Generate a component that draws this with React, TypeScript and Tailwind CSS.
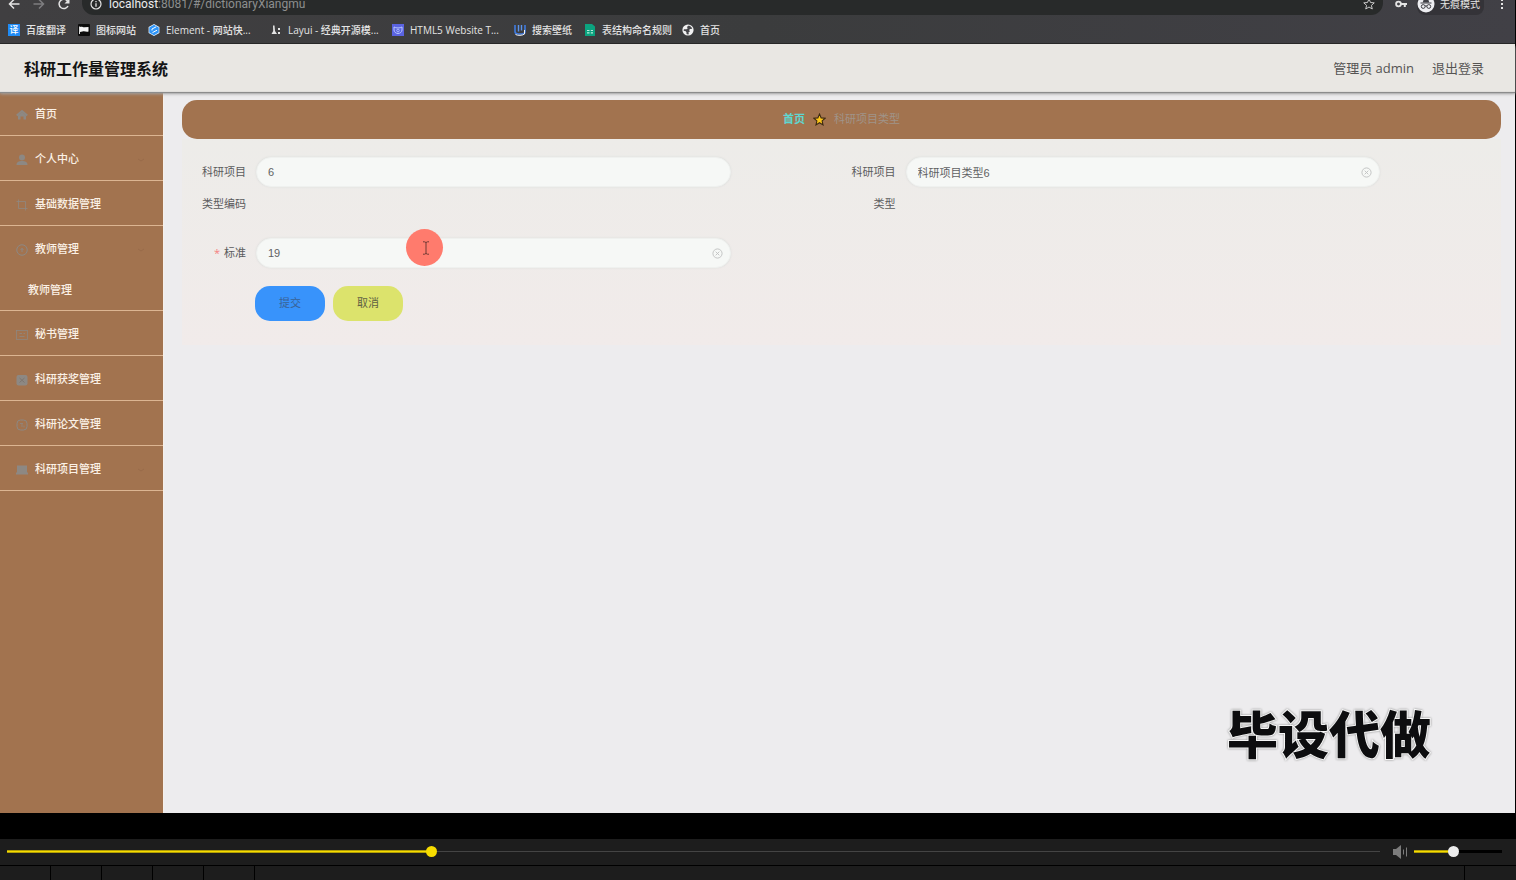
import React, { useState } from 'react';
import clsx from 'clsx';

const Svg = ({ className, children, box = 24 }: { className?: string; children: React.ReactNode; box?: number }) => (
    <svg
        viewBox={`0 0 ${box} ${box}`}
        className={clsx('shrink-0', className)}
        fill="none"
        stroke="currentColor"
        strokeWidth="2"
        aria-hidden="true"
    >
        {children}
    </svg>
);

const bookmarks = [
    {
        label: '百度翻译',
        width: 'w-[70px]',
        icon: (
            <span className="flex size-3 shrink-0 items-center justify-center bg-[#1f8bf5] text-[9px] leading-3 text-white">译</span>
        ),
    },
    {
        label: '图标网站',
        width: 'w-[70px]',
        icon: (
            <Svg box={12} className="size-3">
                <rect width="12" height="12" rx="1" fill="#0c0c0c" stroke="none" />
                <path d="M1.500 2.500v7.500" stroke="#ddd" strokeWidth="1" />
                <path d="M2 3c2-1 3 .6 4.500.3L10.500 3v4.500c-2 .8-3.500-.4-5-.2L2 8z" fill="#f4f4f4" stroke="none" />
            </Svg>
        ),
    },
    {
        label: 'Element - 网站快...',
        width: 'w-[122px]',
        icon: (
            <Svg box={12} className="size-3">
                <path d="M6 0l5.400 3v6L6 12 .6 9V3z" fill="#eaf5ff" stroke="none" />
                <path d="M6 .8l4.700 2.600v5.200L6 11.200 1.300 8.600V3.400z" fill="#2f95f8" stroke="none" />
                <path d="M4 6.500V5L8.200 2.800M4.500 8.600L9 6.200" stroke="#fff" strokeWidth="1" />
            </Svg>
        ),
    },
    {
        label: 'Layui - 经典开源模...',
        width: 'w-[122px]',
        icon: (
            <Svg box={12} className="size-3">
                <path d="M3 1.500h1.500L5 7l2 3H1.500L3.200 7z" fill="#e4e4e4" stroke="none" />
                <path d="M9 4v2M9 8v2" stroke="#e4e4e4" strokeWidth="2" />
            </Svg>
        ),
    },
    {
        label: 'HTML5 Website T...',
        width: 'w-[122px]',
        icon: (
            <Svg box={12} className="size-3">
                <rect width="12" height="12" fill="#5a63e0" stroke="none" />
                <path d="M2 3c2 1.300 6 1.300 8 0v3c0 2-2 3.500-4 3.500S2 8 2 6z" stroke="#b9c8ff" strokeWidth="1" />
                <circle cx="6" cy="6.500" r="1.300" stroke="#b9c8ff" strokeWidth=".8" />
            </Svg>
        ),
    },
    {
        label: '搜索壁纸',
        width: 'w-[70px]',
        icon: (
            <Svg box={12} className="size-3">
                <path d="M1 1v6.500C1 9.300 2.500 10 4.500 10H8c2 0 3-.8 3-2.500V1" stroke="#3f7be0" strokeWidth="1.600" />
                <path d="M4.500 1v6.500M7.500 1v5.500" stroke="#5b93ea" strokeWidth="1.400" />
                <path d="M1.500 10.500c2 1.200 7 1.200 9-.5V6" stroke="#f2f2f2" strokeWidth="1" />
            </Svg>
        ),
    },
    {
        label: '表结构命名规则',
        width: 'w-[98px]',
        icon: (
            <Svg box={12} className="size-3">
                <path d="M1 0h7l3 2.500V12H1z" fill="#0ba37f" stroke="none" />
                <path d="M3 6.500h2.500M6.800 6.500H9M3 8.800h2.500M6.800 8.800H9" stroke="#b8ebdc" strokeWidth="1.200" />
            </Svg>
        ),
    },
    {
        label: '首页',
        width: 'w-[60px]',
        icon: (
            <Svg box={12} className="size-3">
                <circle cx="6" cy="6" r="5.600" fill="#f1f1f1" stroke="none" />
                <path d="M6.800 1.500L4.800 3l1 1.200-1.300 1L2 5.200c-.4.400-.4 1-.3 1.600l2.100.4.700 1.300v1.600c.8.400 1.800.4 2.400.2L6.400 8.500 8 7.200 7 6l1.200-1 2-.3c-.6-1.600-1.700-2.800-3.400-3.200z" fill="#46464a" stroke="none" />
            </Svg>
        ),
    },
];

const menu = [
    {
        label: '首页',
        icon: (
            <>
                <path d="M1.500 13L12 4l10.500 9" strokeWidth="4" />
                <path d="M12 6l8 7v8h-5v-6H9v6H4v-8z" fill="currentColor" stroke="none" />
            </>
        ),
    },
    {
        label: '个人中心',
        icon: (
            <g fill="currentColor" stroke="none">
                <circle cx="12" cy="7" r="6" />
                <path d="M1 22c0-6 4-8 11-8s11 2 11 8z" />
            </g>
        ),
        arrow: true,
    },
    { label: '基础数据管理', icon: <path d="M1 5h18v18M5 1v18h18" strokeWidth="1.500" /> },
    {
        label: '教师管理',
        icon: (
            <>
                <circle cx="12" cy="12" r="10.500" />
                <path d="M12 8v8M9 12l3-3 3 3" />
            </>
        ),
        arrow: true,
        children: ['教师管理'],
    },
    {
        label: '秘书管理',
        icon: (
            <>
                <rect x="1" y="3" width="22" height="18" strokeWidth="1.500" />
                <path d="M7 9h5M7 15h10M15 9h3" strokeWidth="1.500" />
            </>
        ),
    },
    {
        label: '科研获奖管理',
        icon: (
            <>
                <rect x="1" y="2" width="22" height="21" rx="4" fill="currentColor" stroke="none" />
                <path d="M7 8l10 9M17 8L7 17" stroke="#7d7670" />
            </>
        ),
    },
    {
        label: '科研论文管理',
        icon: (
            <>
                <rect x="2" y="2" width="20" height="20" rx="7" />
                <path d="M8 9h6M12 9v7M16 13v4" strokeWidth="1.500" />
            </>
        ),
    },
    {
        label: '科研项目管理',
        icon: <path d="M2 3h20v14h2v4H0v-4h2z" fill="currentColor" stroke="none" />,
        arrow: true,
    },
];

const BrowserBar = () => (
    <div className="h-11 shrink-0 border-b border-[#272727] bg-linear-to-r from-[#403f41] via-[#3b3c3d] to-[#414046] text-[#e4e4e4]">
        <div className="flex h-[15px] items-end pr-[7px]">
            <div className="flex h-[22px] shrink-0 items-center gap-[13px] pl-2">
                <button type="button" aria-label="后退">
                    <Svg box={12} className="size-3"><path d="M11.500 6H1.500M6 1.500L1.500 6 6 10.500" strokeWidth="1.500" /></Svg>
                </button>
                <button type="button" aria-label="前进" className="text-[#7d7d7f]">
                    <Svg box={12} className="size-3"><path d="M.5 6h10M6 1.500L10.500 6 6 10.500" strokeWidth="1.500" /></Svg>
                </button>
                <button type="button" aria-label="刷新">
                    <Svg box={12} className="size-3">
                        <path d="M10 8A4.700 4.700 0 1 1 9.500 3" strokeWidth="1.500" />
                        <path d="M11.500.5v5h-5z" fill="currentColor" stroke="none" />
                    </Svg>
                </button>
            </div>
            <div className="ml-3 flex h-[22px] flex-1 items-center rounded-b-xl bg-[#282a2a] pr-2 pl-2">
                <Svg box={12} className="size-3">
                    <circle cx="6" cy="6" r="5" strokeWidth="1.200" />
                    <path d="M6 5.200v3.500M6 3v1.300" strokeWidth="1.300" />
                </Svg>
                <span className="ml-[7px] flex-1 font-[Roboto,sans-serif] text-[12px] leading-4 text-[#8d8f8f]">
                    <span className="text-[#ececec]">localhost</span>:8081/#/dictionaryXiangmu
                </span>
                <Svg className="size-3 text-[#c9c9c9]">
                    <path d="M12 2l3 7 7.500.7-5.700 5 1.700 7.300L12 18l-6.500 4 1.700-7.300-5.700-5L9 9z" />
                </Svg>
            </div>
            <div className="flex h-[22px] shrink-0 items-center pl-3">
                <Svg box={12} className="size-3">
                    <circle cx="3.500" cy="6" r="2.400" strokeWidth="1.800" />
                    <path d="M6 6h6M9.800 6v3" strokeWidth="2" />
                </Svg>
                <div className="ml-[10px] flex h-[22px] items-center gap-[5px] rounded-b-lg bg-[#343338] pr-1">
                    <Svg box={18} className="size-[18px]">
                        <circle cx="9" cy="9" r="8.500" fill="#eeeef2" stroke="none" />
                        <path d="M5.800 7.200L7 3.500h4l1.200 3.700zM3.500 7.500h11v1h-11z" fill="#3f3f45" stroke="none" />
                        <circle cx="6.200" cy="11.500" r="1.900" stroke="#3f3f45" strokeWidth="1" />
                        <circle cx="11.800" cy="11.500" r="1.900" stroke="#3f3f45" strokeWidth="1" />
                        <path d="M8 11h2" stroke="#3f3f45" strokeWidth="1" />
                    </Svg>
                    <span className="text-[10px] leading-4">无痕模式</span>
                </div>
                <Svg box={12} className="ml-3 size-3">
                    <path d="M5 1h2v2H5zM5 5h2v2H5zM5 9h2v2H5z" fill="currentColor" stroke="none" />
                </Svg>
            </div>
        </div>
        <nav className="flex h-7 items-center pt-px pl-2">
            {bookmarks.map(b => (
                <a key={b.label} href="#" className={clsx('flex shrink-0 items-center gap-[6px] text-[10px] leading-4 font-medium whitespace-nowrap', b.width)}>
                    {b.icon}
                    {b.label}
                </a>
            ))}
        </nav>
    </div>
);

const Sidebar = () => (
    <aside className="w-[164px] shrink-0 border-r border-[#f6f0ea] bg-[#a2734f] text-[11px] font-medium text-[#fbf1e6]">
        <ul>
            {menu.map(item => (
                <li key={item.label} className="border-b border-[#dcb592]">
                    <a href="#" className="flex h-11 items-center pt-[3px] pr-[18px] pl-4">
                        <Svg className="size-3 text-[#8d8883]">{item.icon}</Svg>
                        <span className="ml-[7px] flex-1">{item.label}</span>
                        {item.arrow && (
                            <Svg box={8} className="size-2 text-[#996b4a]"><path d="M1 3l3 2 3-2" strokeWidth="1" /></Svg>
                        )}
                    </a>
                    {item.children?.map(child => (
                        <a key={child} href="#" className="flex h-10 items-center pl-7">{child}</a>
                    ))}
                </li>
            ))}
        </ul>
    </aside>
);

type FieldProps = {
    id: string;
    label: string;
    value: string;
    onChange: (value: string) => void;
    required?: boolean;
    clearable?: boolean;
};

const Field = ({ id, label, value, onChange, required, clearable }: FieldProps) => (
    <div className="flex items-start pr-[111px]">
        <label htmlFor={id} className="w-[64px] shrink-0 pr-[10px] text-right text-[11px] leading-8 text-[#5b5b5d]">
            {required && <span className="mr-1 text-[#f58080]">*</span>}
            {label}
        </label>
        <div className="relative flex h-8 flex-1 items-center">
            <input
                id={id}
                value={value}
                onChange={e => onChange(e.target.value)}
                className="h-[30px] w-full rounded-[15px] border border-[#eff1ef] bg-[#f6f8f6] px-[11px] font-['Liberation_Sans','Noto_Sans_CJK_SC',sans-serif] text-[11px] text-[#5f6163] shadow-[0_0_2px_#d9dbd9] outline-none"
            />
            {clearable && (
                <button type="button" aria-label="清空" className="absolute right-2 text-[#bfc1c1]" onClick={() => onChange('')}>
                    <Svg box={12} className="size-[11px]">
                        <circle cx="6" cy="6" r="5" strokeWidth="1" />
                        <path d="M4 4l4 4M8 4L4 8" strokeWidth="1" />
                    </Svg>
                </button>
            )}
        </div>
    </div>
);

const ProjectTypeForm = () => {
    const [form, setForm] = useState({ code: '6', type: '科研项目类型6', standard: '19' });

    return (
        <form
            onSubmit={e => e.preventDefault()}
            className="bg-linear-to-b from-[#edece9] to-[#f1ebea] px-[10px] pt-[17px] pb-6"
        >
            <div className="grid grid-cols-2 gap-y-[17px]">
                <Field id="code" label="科研项目类型编码" value={form.code} onChange={code => setForm({ ...form, code })} />
                <Field id="type" label="科研项目类型" value={form.type} onChange={type => setForm({ ...form, type })} clearable />
                <Field id="standard" label="标准" value={form.standard} onChange={standard => setForm({ ...form, standard })} required clearable />
            </div>
            <div className="mt-[17px] flex gap-2 pl-[63px] text-[11px]">
                <button type="submit" className="h-[35px] w-[70px] rounded-[15px] bg-[#3893fb] text-[#3a6296]">提交</button>
                <button type="button" className="h-[35px] w-[70px] rounded-[15px] bg-[#dce36c] text-[#5f6144]">取消</button>
            </div>
        </form>
    );
};

const Player = () => {
    const [time, setTime] = useState(308);
    const [volume, setVolume] = useState(44);

    return (
        <footer className="shrink-0 bg-black pt-[26px]">
            <div className="flex h-[26px] items-center bg-[#1d1d1d] pr-[14px] pb-px pl-[7px]">
                <input
                    type="range"
                    aria-label="播放进度"
                    min={0}
                    max={1000}
                    value={time}
                    onChange={e => setTime(Number(e.target.value))}
                    style={{ backgroundSize: `${time / 10}% 3px, 100% 1px` }}
                    className="h-[11px] min-w-0 flex-1 appearance-none bg-[linear-gradient(#8e7f08,#f7dc00,#8e7f08),linear-gradient(#444,#444)] bg-left bg-no-repeat [&::-webkit-slider-thumb]:size-[11px] [&::-webkit-slider-thumb]:appearance-none [&::-webkit-slider-thumb]:rounded-full [&::-webkit-slider-thumb]:bg-[#f7dc00]"
                />
                <button type="button" aria-label="静音" className="mx-[6px] pl-[6px] text-[#7c7c7c]">
                    <Svg box={16} className="size-4">
                        <path d="M1 5h3l5-4v14l-5-4H1z" fill="currentColor" stroke="none" />
                        <path d="M11.500 5.500v5M14.500 3.500v9" strokeWidth="1" />
                    </Svg>
                </button>
                <input
                    type="range"
                    aria-label="音量"
                    value={volume}
                    onChange={e => setVolume(Number(e.target.value))}
                    style={{ backgroundSize: `${volume}% 3px, 100% 3px` }}
                    className="h-[11px] w-[88px] appearance-none bg-[linear-gradient(#8e7f08,#f7dc00,#8e7f08),linear-gradient(#000,#000)] bg-left bg-no-repeat [&::-webkit-slider-thumb]:size-[11px] [&::-webkit-slider-thumb]:appearance-none [&::-webkit-slider-thumb]:rounded-full [&::-webkit-slider-thumb]:bg-[#ececec]"
                />
            </div>
            <div className="mt-px flex h-[14px] bg-[#1d1d1d]">
                {[0, 1, 2, 3, 4].map(i => (
                    <div key={i} className="w-[51px] border-r border-black" />
                ))}
                <div className="flex-1" />
                <div className="w-[52px] border-l border-black" />
            </div>
        </footer>
    );
};

export default function App() {
    return (
        <div className="flex h-screen flex-col overflow-hidden bg-black font-['Open_Sans','Noto_Sans_CJK_SC',sans-serif]">
            <div className="relative mr-px flex min-h-0 flex-1 flex-col bg-[#edecee]">
                <BrowserBar />
                <header className="z-10 flex h-[47px] shrink-0 items-center justify-between bg-[#e9e7e3] pt-[2px] pr-[31px] pl-6 shadow-[0_1px_0_#e0dedb,0_2px_1px_#8c8c8c,0_3px_3px_#a5a5a5]">
                    <h1 className="text-base font-bold text-[#141414]">科研工作量管理系统</h1>
                    <div className="flex gap-[18px] text-[13px] text-[#555453]">
                        <span>管理员 admin</span>
                        <a href="#">退出登录</a>
                    </div>
                </header>
                <div className="flex min-h-0 flex-1">
                    <Sidebar />
                    <main className="min-w-0 flex-1 pt-[9px] pr-[14px] pl-[18px]">
                        <nav className="flex h-[39px] items-center justify-center gap-2 rounded-[15px] bg-[#a2734f] text-[11px]">
                            <a href="#" className="font-bold text-[#5fd6d0]">首页</a>
                            <Svg className="size-[13px]">
                                <path
                                    d="M12 2l3 7 7.500.7-5.700 5 1.700 7.300L12 18l-6.500 4 1.700-7.300-5.700-5L9 9z"
                                    fill="#fcc419"
                                    stroke="#3d2a12"
                                />
                            </Svg>
                            <span className="text-[#a09389]">科研项目类型</span>
                        </nav>
                        <ProjectTypeForm />
                    </main>
                </div>

                {/* mouse highlight */}
                <div className="pointer-events-none absolute top-[229px] left-[406px] z-20 flex size-[37px] items-center justify-center rounded-full bg-[#ff7b6d] text-[#6f3a35]">
                    <Svg box={14} className="size-[14px]">
                        <path d="M5 .8h1.500L8 1.500 9.500.8H11M8 1.500v11M5 13.200h1.500L8 12.500l1.500.7H11" strokeWidth="1" />
                    </Svg>
                </div>
                <div className="pointer-events-none absolute right-[84px] bottom-[42px] text-[51px] leading-[74px] font-black text-[#0d0d0f] [paint-order:stroke_fill] [-webkit-text-stroke:2px_#f6f6f6] drop-shadow-[0_0_1px_#8a8a8a]">
                    毕设代做
                </div>
            </div>
            <Player />
        </div>
    );
}
